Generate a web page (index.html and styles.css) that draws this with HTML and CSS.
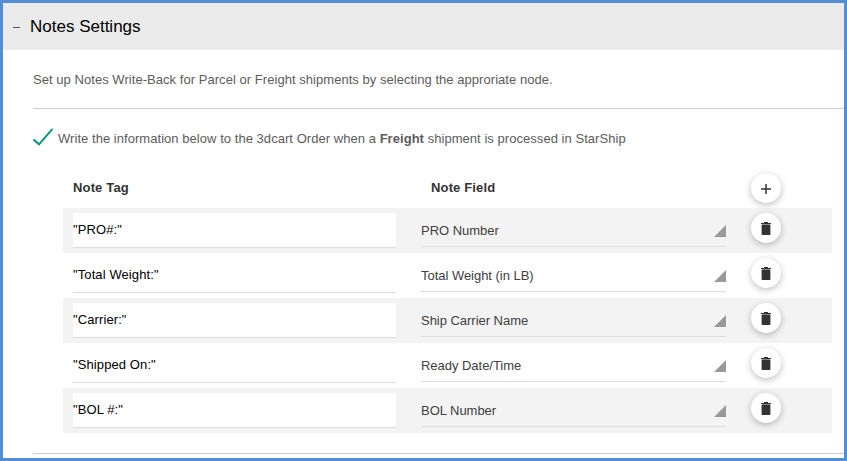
FILE: index.html
```html
<!DOCTYPE html>
<html lang="en">
<head>
<meta charset="utf-8">
<title>Notes Settings</title>
<link rel="stylesheet" href="styles.css">
</head>
<body>
<svg width="0" height="0" class="defs">
  <symbol id="trash" viewBox="0 0 10 13"><path d="M3 0h4v1h3v1H0V1h3z"/><path fill="#888" d="M1 2h8v1H1z"/><path d="M.6 3h8.800v9.200q0 .8-.8.8H1.400q-.8 0-.8-.8z"/></symbol>
  <symbol id="corner" viewBox="0 0 12 12"><path d="M12 0v12H0z"/></symbol>
</svg>
<main class="panel">
  <header class="panel-header"><span class="toggle"></span><h1>Notes Settings</h1></header>
  <section class="content">
    <p class="intro">Set up Notes Write-Back for Parcel or Freight shipments by selecting the approriate node.</p>
    <div class="option">
      <svg class="check" viewBox="0 0 20 18"><path d="M.5 11.500 6 16.300 19.500.800"/></svg>
      <span>Write the information below to the 3dcart Order when a <b>Freight</b> shipment is processed in StarShip</span>
    </div>
    <div class="notes">
      <div class="row head"><b class="tag-title">Note Tag</b><b class="field-title">Note Field</b><button class="round"><svg class="plus" viewBox="0 0 10 10"><path d="M5 0v10M0 5h10"/></svg></button></div>
      <div class="row"><div class="tag">"PRO#:"</div><div class="field"><span>PRO Number</span><svg class="corner"><use href="#corner"/></svg></div><button class="round"><svg class="trash"><use href="#trash"/></svg></button></div>
      <div class="row"><div class="tag">"Total Weight:"</div><div class="field"><span>Total Weight (in LB)</span><svg class="corner"><use href="#corner"/></svg></div><button class="round"><svg class="trash"><use href="#trash"/></svg></button></div>
      <div class="row"><div class="tag">"Carrier:"</div><div class="field"><span>Ship Carrier Name</span><svg class="corner"><use href="#corner"/></svg></div><button class="round"><svg class="trash"><use href="#trash"/></svg></button></div>
      <div class="row"><div class="tag">"Shipped On:"</div><div class="field"><span>Ready Date/Time</span><svg class="corner"><use href="#corner"/></svg></div><button class="round"><svg class="trash"><use href="#trash"/></svg></button></div>
      <div class="row"><div class="tag">"BOL #:"</div><div class="field"><span>BOL Number</span><svg class="corner"><use href="#corner"/></svg></div><button class="round"><svg class="trash"><use href="#trash"/></svg></button></div>
    </div>
  </section>
</main>
</body>
</html>
```
FILE: styles.css
```css
* { box-sizing: border-box; }
body { margin: 0; font: 13px/16px "Liberation Sans", Arial, sans-serif; letter-spacing: .045px; color: #5c5c5c; background: #fff; }
.defs { display: none; }
.panel { width: 847px; height: 461px; border: 3px solid #548dd4; overflow: hidden; }
.panel-header { display: flex; align-items: center; height: 47px; padding-left: 10px; background: #ebebeb; }
.toggle { width: 7px; height: 1px; margin-top: 2px; background: #555; }
h1 { margin: 0 0 0 10px; font-size: 17px; line-height: 20px; font-weight: 400; letter-spacing: 0; color: #000; }
.content { margin-left: 30px; height: 404px; border-bottom: 1px solid #ccc; }
.intro { height: 59px; margin: 0; padding-top: 22px; border-bottom: 1px solid #ccc; }
.option { display: flex; height: 59px; padding-top: 22px; }
.check { width: 20px; height: 18px; margin: -3px 5px 0 0; fill: none; stroke: #009688; stroke-width: 2; }
.notes { width: 769px; margin-left: 30px; }
.row { display: flex; height: 45px; padding: 5px 0 5px 10px; color: #404040; }
.row:nth-child(even) { background: #f3f3f3; }
.head { height: 40px; color: #333; letter-spacing: .15px; }
.tag-title { width: 358px; padding-top: 7px; }
.field-title { width: 320px; padding-top: 7px; }
.tag { width: 323px; height: 35px; padding-top: 9px; background: #fff; border-bottom: 1px solid #ddd; color: #000; letter-spacing: .1px; }
.field { display: flex; justify-content: space-between; width: 305px; height: 34px; margin-left: 25px; padding-top: 10px; border-bottom: 1px solid #ddd; letter-spacing: -.03px; }
.corner { width: 12px; height: 12px; margin-top: 2px; fill: #999; }
.round { display: flex; align-items: center; justify-content: center; width: 30px; height: 30px; margin-left: 25px; padding: 0; border: 0; border-radius: 50%; background: #fff; box-shadow: 0 2px 7px rgba(0,0,0,.26); position: relative; }
.head .round { margin-left: 0; }
.trash { width: 10px; height: 13px; margin-top: 1px; fill: #333; }
.plus { width: 10px; height: 10px; margin-top: 1px; stroke: #333; stroke-width: 1.500; }
```
